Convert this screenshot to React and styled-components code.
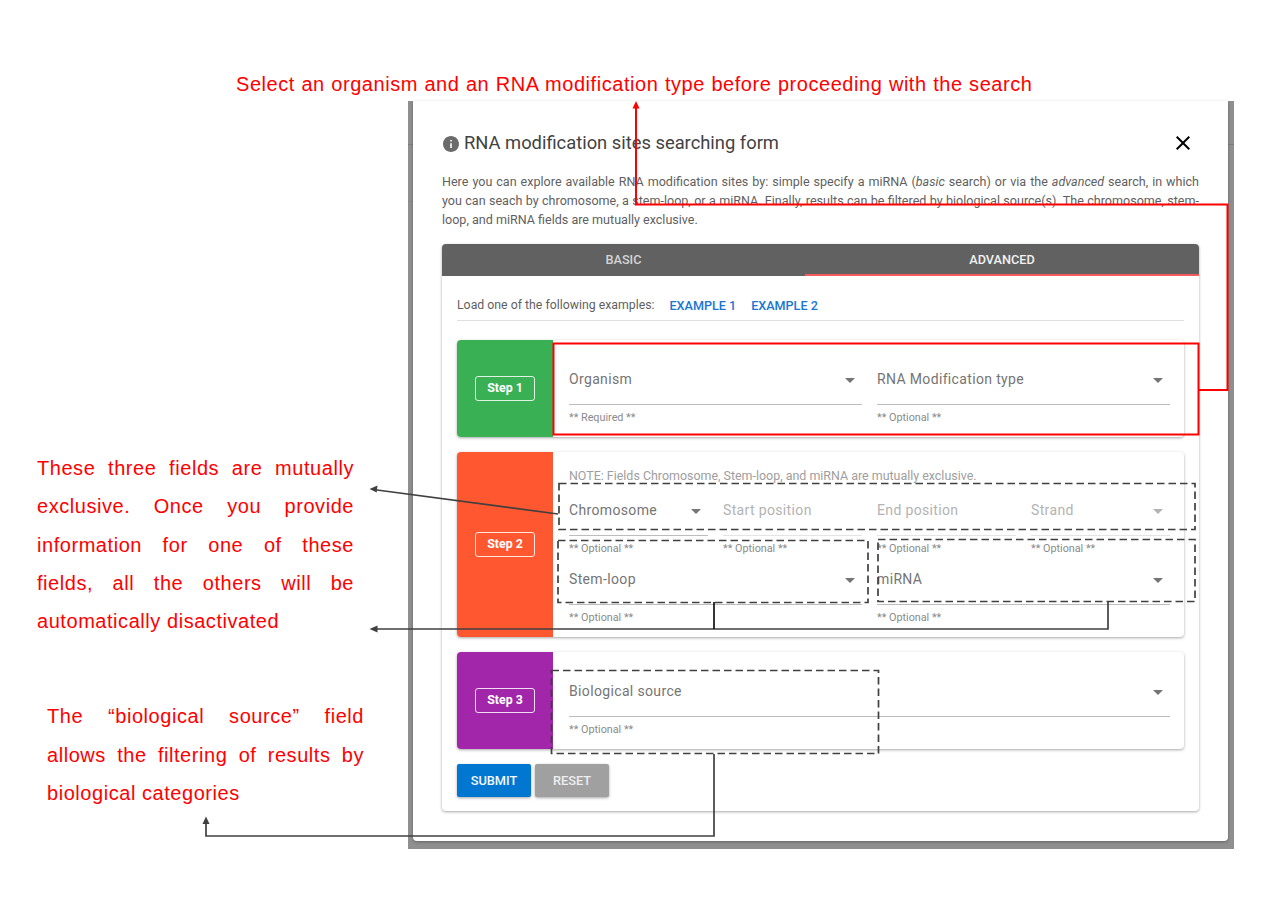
import React from "react";
import styled, { createGlobalStyle } from "styled-components";

const Global = createGlobalStyle`
  html, body { margin: 0; padding: 0; background: #fff; }
  * { box-sizing: border-box; }
`;

const Sheet = styled.div`
  position: relative;
  width: 1280px;
  height: 909px;
  overflow: hidden;
  background: #fff;
  font-family: Roboto, "Liberation Sans", sans-serif;
`;

const RedNote = styled.div`
  font-family: "Liberation Sans", Arial, sans-serif;
  font-size: 20px;
  color: #ff0000;
  letter-spacing: 0.55px;
`;

const TopNote = styled(RedNote)`
  height: 101px;
  padding: 72px 0 0 236px;
  line-height: 24px;
  word-spacing: 0.4px;
  white-space: nowrap;
`;

const Main = styled.div`
  display: flex;
  align-items: flex-start;
`;

const NotesColumn = styled.div`
  width: 408px;
  flex: none;
  display: flex;
  flex-direction: column;
`;

const SideNote = styled(RedNote)`
  width: 317px;
  margin-left: ${(p) => p.$left}px;
  margin-top: ${(p) => p.$top}px;
`;

const NoteLine = styled.div`
  line-height: 38.3px;
  white-space: normal;
  text-align: justify;
  text-align-last: ${(p) => (p.$last ? "left" : "justify")};
`;

const Backdrop = styled.div`
  width: 826px;
  height: 748px;
  padding: 0 6px 8px 5px;
  background:
    linear-gradient(#7d7d7d, #7d7d7d) 0 43px / 100% 1px no-repeat,
    linear-gradient(#8a8a8a, #8a8a8a) 0 100px / 100% 1px no-repeat,
    #8f8f8f;
`;

const Modal = styled.div`
  height: 100%;
  background: #fff;
  border-radius: 0 0 4px 4px;
  padding: 29px 29px 0 29px;
  box-shadow: 0 1px 3px rgba(0, 0, 0, 0.3);
`;

const Header = styled.div`
  display: flex;
  align-items: center;
  height: 26px;
`;

const Title = styled.h2`
  margin: 0 0 0 5px;
  flex: 1;
  font-size: 18.35px;
  font-weight: 400;
  line-height: 26px;
  color: #424242;
`;

const InfoIcon = styled.svg`
  width: 16px;
  height: 16px;
  margin-left: 1px;
  margin-top: 2px;
  fill: #6b6b6b;
`;

const CloseIcon = styled.svg`
  width: 24px;
  height: 24px;
  margin-right: 4px;
  fill: #000;
`;

const Intro = styled.p`
  margin: 16px 0 0;
  font-size: 12.55px;
  line-height: 19px;
  color: #5f5f5f;
  text-align: justify;
  height: 57px;
`;

const Card = styled.div`
  margin-top: 15px;
  width: 757px;
  height: 567px;
  background: #fff;
  border-radius: 4px;
  box-shadow: 0 1px 3px rgba(0, 0, 0, 0.35);
`;

const Tabs = styled.div`
  display: grid;
  grid-template-columns: 363px 394px;
  height: 32px;
  background: #616161;
  border-radius: 4px 4px 0 0;
  overflow: hidden;
`;

const Tab = styled.div`
  display: flex;
  align-items: center;
  justify-content: center;
  font-size: 12.7px;
  font-weight: 500;
  color: ${(p) => (p.$active ? "#f2f2f2" : "#d4d4d4")};
  border-bottom: 2px solid ${(p) => (p.$active ? "#f45b5b" : "transparent")};
  padding-top: 1px;
`;

const CardBody = styled.div`
  padding: 14px 15px 0;
`;

const ExampleRow = styled.div`
  display: flex;
  align-items: center;
  height: 31px;
  border-bottom: 1px solid #e0e0e0;
  font-size: 12.3px;
  color: #5f5f5f;
`;

const ExampleLink = styled.a`
  font-size: 12.6px;
  font-weight: 500;
  color: #1976d2;
  margin-left: 15px;
`;

const Steps = styled.div`
  margin-top: 19px;
  display: flex;
  flex-direction: column;
  gap: 15px;
`;

const StepCard = styled.div`
  display: flex;
  height: ${(p) => p.$height}px;
  border-radius: 4px;
  background: #fff;
  box-shadow: 0 1px 3px rgba(0, 0, 0, 0.35);
  overflow: hidden;
`;

const StepStripe = styled.div`
  width: 96px;
  flex: none;
  display: flex;
  align-items: center;
  justify-content: center;
  background: ${(p) => p.$color};
`;

const StepBadge = styled.div`
  width: 60px;
  height: 25px;
  display: flex;
  align-items: center;
  justify-content: center;
  padding-bottom: 2px;
  border: 1px solid rgba(255, 255, 255, 0.85);
  border-radius: 3px;
  font-size: 12.4px;
  font-weight: 700;
  color: #fff;
`;

const StepContent = styled.div`
  flex: 1;
  padding: ${(p) => p.$top}px 14px 0 16px;
  min-width: 0;
`;

const Note = styled.div`
  font-size: 12.45px;
  line-height: 16px;
  color: #9e9e9e;
  margin-bottom: 16px;
`;

const FieldGrid = styled.div`
  display: grid;
  grid-template-columns: repeat(${(p) => p.$cols}, 1fr);
  column-gap: 15px;
  margin-bottom: ${(p) => p.$after || 0}px;
`;

const Field = styled.div`
  min-width: 0;
`;

const Control = styled.div`
  position: relative;
  height: 36px;
  font-size: 14px;
  line-height: 20px;
  letter-spacing: 0.35px;
  color: ${(p) => (p.$disabled ? "#b3b3b3" : "#757575")};
  border-bottom: 1px solid ${(p) => (p.$disabled ? "#e4e4e4" : "#bdbdbd")};
`;

const Arrow = styled.svg`
  position: absolute;
  right: 0;
  top: -1px;
  width: 24px;
  height: 24px;
  fill: ${(p) => (p.$disabled ? "#b3b3b3" : "#757575")};
`;

const Helper = styled.div`
  margin-top: 6px;
  font-size: 10.8px;
  line-height: 13px;
  color: #8a8a8a;
`;

const Actions = styled.div`
  display: flex;
  gap: 4px;
  margin-top: 15px;
`;

const Button = styled.button`
  height: 33px;
  width: 74px;
  border: 0;
  border-radius: 2px;
  background: ${(p) => p.$color};
  color: ${(p) => p.$text};
  font-family: inherit;
  font-size: 12.8px;
  font-weight: 500;
  padding: 0 0 1px;
  box-shadow: 0 1px 3px rgba(0, 0, 0, 0.35);
`;

const Overlay = styled.svg`
  position: absolute;
  left: 0;
  top: 0;
  width: 1280px;
  height: 909px;
  pointer-events: none;
`;

const ARROW = "M7 10l5 5 5-5z";

function Select({ label, disabled, helper, noArrow }) {
  return (
    <Field>
      <Control $disabled={disabled}>
        {label}
        {!noArrow && (
          <Arrow $disabled={disabled} viewBox="0 0 24 24">
            <path d={ARROW} />
          </Arrow>
        )}
      </Control>
      <Helper>{helper}</Helper>
    </Field>
  );
}

const G = "#404040";

export default function App() {
  return (
    <Sheet>
      <Global />
      <TopNote>Select an organism and an RNA modification type before proceeding with the search</TopNote>
      <Main>
        <NotesColumn>
          <SideNote $left={37} $top={348}>
            <NoteLine>These three fields are mutually</NoteLine>
            <NoteLine>exclusive. Once you provide</NoteLine>
            <NoteLine>information for one of these</NoteLine>
            <NoteLine>fields, all the others will be</NoteLine>
            <NoteLine $last>automatically disactivated</NoteLine>
          </SideNote>
          <SideNote $left={47} $top={57}>
            <NoteLine>The “biological source” field</NoteLine>
            <NoteLine>allows the filtering of results by</NoteLine>
            <NoteLine $last>biological categories</NoteLine>
          </SideNote>
        </NotesColumn>
        <Backdrop>
          <Modal>
            <Header>
              <InfoIcon viewBox="2 2 20 20">
                <path d="M12 2C6.48 2 2 6.48 2 12s4.48 10 10 10 10-4.48 10-10S17.52 2 12 2zm1 15h-2v-6h2v6zm0-8h-2V7h2v2z" />
              </InfoIcon>
              <Title>RNA modification sites searching form</Title>
              <CloseIcon viewBox="0 0 24 24">
                <path d="M19 6.41L17.59 5 12 10.59 6.41 5 5 6.41 10.59 12 5 17.59 6.41 19 12 13.41 17.59 19 19 17.59 13.41 12z" />
              </CloseIcon>
            </Header>
            <Intro>
              Here you can explore available RNA modification sites by: simple specify a miRNA (<em>basic</em> search) or via the <em>advanced</em> search, in which you can seach by chromosome, a stem-loop, or a miRNA. Finally, results can be filtered by biological source(s). The chromosome, stem-loop, and miRNA fields are mutually exclusive.
            </Intro>
            <Card>
              <Tabs>
                <Tab>BASIC</Tab>
                <Tab $active>ADVANCED</Tab>
              </Tabs>
              <CardBody>
                <ExampleRow>
                  Load one of the following examples:
                  <ExampleLink>EXAMPLE 1</ExampleLink>
                  <ExampleLink>EXAMPLE 2</ExampleLink>
                </ExampleRow>
                <Steps>
                  <StepCard $height={97}>
                    <StepStripe $color="#3ab054"><StepBadge>Step 1</StepBadge></StepStripe>
                    <StepContent $top={29}>
                      <FieldGrid $cols={2}>
                        <Select label="Organism" helper="** Required **" />
                        <Select label="RNA Modification type" helper="** Optional **" />
                      </FieldGrid>
                    </StepContent>
                  </StepCard>
                  <StepCard $height={185}>
                    <StepStripe $color="#ff5730"><StepBadge>Step 2</StepBadge></StepStripe>
                    <StepContent $top={16}>
                      <Note>NOTE: Fields Chromosome, Stem-loop, and miRNA are mutually exclusive.</Note>
                      <FieldGrid $cols={4} $after={14}>
                        <Select label="Chromosome" helper="** Optional **" />
                        <Select label="Start position" helper="** Optional **" disabled noArrow />
                        <Select label="End position" helper="** Optional **" disabled noArrow />
                        <Select label="Strand" helper="** Optional **" disabled />
                      </FieldGrid>
                      <FieldGrid $cols={2}>
                        <Select label="Stem-loop" helper="** Optional **" />
                        <Select label="miRNA" helper="** Optional **" />
                      </FieldGrid>
                    </StepContent>
                  </StepCard>
                  <StepCard $height={97}>
                    <StepStripe $color="#a126a9"><StepBadge>Step 3</StepBadge></StepStripe>
                    <StepContent $top={29}>
                      <FieldGrid $cols={1}>
                        <Select label="Biological source" helper="** Optional **" />
                      </FieldGrid>
                    </StepContent>
                  </StepCard>
                </Steps>
                <Actions>
                  <Button $color="#0277d1" $text="#f4f8fc">SUBMIT</Button>
                  <Button $color="#a0a0a0" $text="#eeeeee">RESET</Button>
                </Actions>
              </CardBody>
            </Card>
          </Modal>
        </Backdrop>
      </Main>
      <Overlay viewBox="0 0 1280 909" fill="none">
        <rect x="553.5" y="343.5" width="645" height="91" stroke="#ff0000" strokeWidth="2" />
        <path d="M636 108V204.5H1227.5V390H1199" stroke="#ff0000" strokeWidth="2" />
        <path d="M636 101l-3.5 7.5h7z" fill="#ff0000" />
        <g stroke={G} strokeWidth="1.7" strokeDasharray="7.5 4">
          <rect x="559" y="483.5" width="636" height="46" />
          <rect x="558" y="540.5" width="310" height="62" />
          <rect x="878" y="539.5" width="317" height="62" />
          <rect x="551.5" y="670.5" width="327" height="83" />
        </g>
        <g stroke={G} strokeWidth="1.7">
          <path d="M558 514L377 490" />
          <path d="M377 629H1108V602" />
          <path d="M714 602V629" stroke="#111" />
          <path d="M714 754V836H206V823" />
        </g>
        <g fill={G}>
          <path d="M369.5 489l8-3.5-.8 7z" />
          <path d="M369.5 629l8-3.5v7z" />
          <path d="M206 816.5l-3.5 7.5h7z" />
        </g>
      </Overlay>
    </Sheet>
  );
}
